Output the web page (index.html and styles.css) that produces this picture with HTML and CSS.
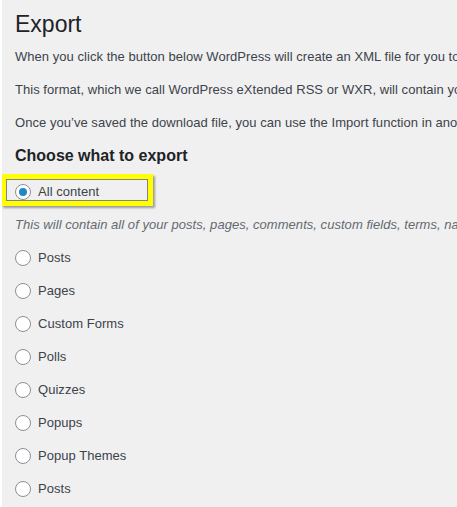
FILE: index.html
```html
<!DOCTYPE html>
<html>
<head>
<meta charset="utf-8">
<link rel="stylesheet" href="styles.css">
</head>
<body>
<div class="wrap">
  <h1 class="title">Export</h1>
  <p class="text">When you click the button below WordPress will create an XML file for you to save to your computer.</p>
  <p class="text">This format, which we call WordPress eXtended RSS or WXR, will contain your posts, pages, comments, custom fields, categories, and tags.</p>
  <p class="text">Once you’ve saved the download file, you can use the Import function in another WordPress installation to import the content from this site.</p>
  <h2 class="subtitle">Choose what to export</h2>
  <div class="choices">
    <label class="choice choice-first">
      <span class="radio checked"></span>
      <span class="choice-label">All content</span>
      <span class="highlight"></span>
    </label>
    <p class="desc">This will contain all of your posts, pages, comments, custom fields, terms, navigation menus, and custom posts.</p>
    <label class="choice"><span class="radio"></span><span class="choice-label">Posts</span></label>
    <label class="choice"><span class="radio"></span><span class="choice-label">Pages</span></label>
    <label class="choice"><span class="radio"></span><span class="choice-label">Custom Forms</span></label>
    <label class="choice"><span class="radio"></span><span class="choice-label">Polls</span></label>
    <label class="choice"><span class="radio"></span><span class="choice-label">Quizzes</span></label>
    <label class="choice"><span class="radio"></span><span class="choice-label">Popups</span></label>
    <label class="choice"><span class="radio"></span><span class="choice-label">Popup Themes</span></label>
    <label class="choice"><span class="radio"></span><span class="choice-label">Posts</span></label>
  </div>
</div>
</body>
</html>
```

FILE: styles.css
```css
html, body {
  margin: 0;
  padding: 0;
  background: #f0f0f1;
  overflow: hidden;
}

body {
  font-family: "Liberation Sans", Arial, sans-serif;
  color: #3c434a;
  font-size: 13px;
  line-height: 20px;
  letter-spacing: 0.04px;
}

.wrap {
  border-left: 2px solid #ffffff;
  padding: 10px 0 0 13px;
  min-height: 507px;
  box-sizing: border-box;
  white-space: nowrap;
  overflow: hidden;
}

.title {
  margin: 0;
  font-size: 23px;
  line-height: 29px;
  font-weight: 400;
  letter-spacing: 0;
  color: #1d2327;
}

.text {
  margin: 8px 0 0;
}

.text + .text {
  margin-top: 13px;
}

.subtitle {
  margin: 12px 0 0;
  font-size: 16px;
  line-height: 22px;
  font-weight: 700;
  letter-spacing: 0;
  color: #1d2327;
}

.choices {
  display: flex;
  flex-direction: column;
  gap: 13px;
  margin-top: 15px;
}

.choice {
  display: flex;
  align-items: center;
  height: 20px;
  gap: 7px;
}

.choice-first {
  position: relative;
}

.radio {
  width: 16px;
  height: 16px;
  box-sizing: border-box;
  border: 1px solid #8c8f94;
  border-radius: 50%;
  background: #ffffff;
  display: flex;
  align-items: center;
  justify-content: center;
  flex: none;
}

.radio.checked::after {
  content: "";
  width: 8px;
  height: 8px;
  border-radius: 50%;
  background: #1e88c9;
}

.desc {
  margin: 0;
  font-style: italic;
  color: #646970;
}

.highlight {
  position: absolute;
  left: -14px;
  top: -8px;
  width: 152px;
  height: 32px;
  box-sizing: border-box;
  border: 5px solid #ffff00;
  box-shadow: inset 0 0 0 1px rgba(0, 0, 0, 0.45), 2px 2px 2px rgba(0, 0, 0, 0.35);
}
```
